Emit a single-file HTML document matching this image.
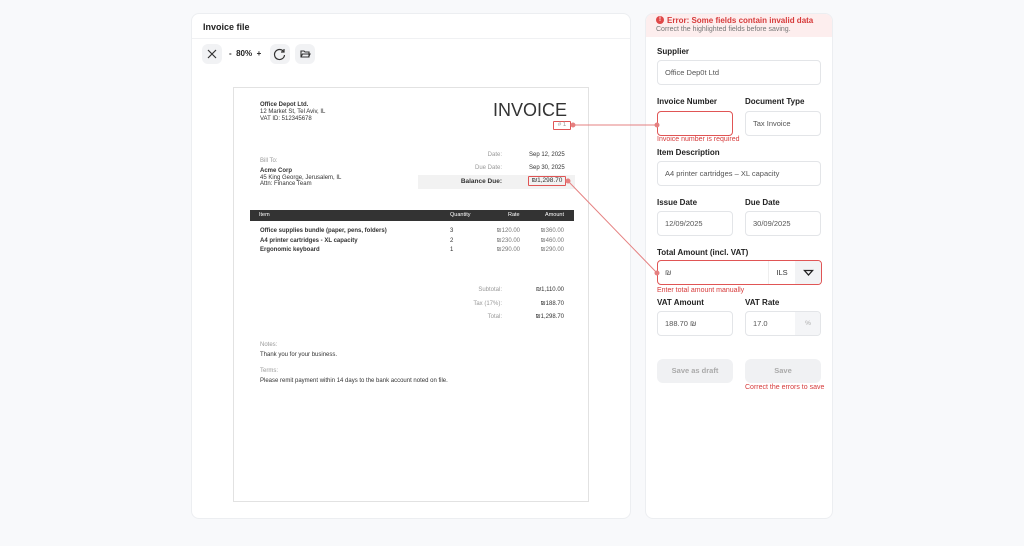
<!DOCTYPE html>
<html><head><meta charset="utf-8"><style>
*{box-sizing:border-box;margin:0;padding:0}
body{width:1024px;height:546px;background:#f8f9fb;font-family:"Liberation Sans",sans-serif;position:relative;overflow:hidden;color:#222}
.a{position:absolute}
.card{position:absolute;background:#fff;border:1px solid #eceef1;border-radius:8px}
.btn{position:absolute;width:20px;height:20px;border-radius:6px;background:#f1f2f4}
.doc{font-size:6px;color:#333}
.lbl{position:absolute;font-size:8px;font-weight:bold;color:#222}
.inp{position:absolute;height:25px;border:1px solid #e3e5e8;border-radius:4px;background:#fff;font-size:7.5px;color:#555;padding-left:7px;line-height:23px}
.err{position:absolute;font-size:7px;color:#d63a3a}
.r{text-align:right}
</style></head><body>
<div class="card" style="left:191px;top:13px;width:440px;height:506px"></div>
<div class="a" style="left:203px;top:22px;font-size:9px;font-weight:bold">Invoice file</div>
<div class="a" style="left:192px;top:38px;width:438px;height:1px;background:#f0f1f3"></div>
<div class="btn" style="left:202px;top:44px"><svg width="20" height="20"><path d="M6 6L14 14M14 6L6 14" stroke="#333" stroke-width="1.2"/></svg></div>
<div class="a" style="left:229px;top:49px;font-size:8px;font-weight:bold">-&nbsp;&nbsp;80%&nbsp;&nbsp;+</div>
<div class="btn" style="left:270px;top:44px"><svg width="20" height="20"><path d="M13.5 7.5A5 5 0 1 0 14.5 11" fill="none" stroke="#333" stroke-width="1.2"/><path d="M14 5V8H11" fill="none" stroke="#333" stroke-width="1.2"/></svg></div>
<div class="btn" style="left:295px;top:44px"><svg width="20" height="20"><path d="M6 13V7H9L10 8H14V13Z M6 13L7.5 10H15L13.5 13" fill="none" stroke="#333" stroke-width="1.1"/></svg></div>

<div class="a doc" style="left:233px;top:87px;width:356px;height:415px;border:1px solid #e2e2e2;background:#fff">
<div class="a" style="left:26px;top:14px;line-height:7px"><b>Office Depot Ltd.</b><br>12 Market St, Tel Aviv, IL<br>VAT ID: 512345678</div>
<div class="a" style="right:21px;top:12px;font-size:18px;color:#333">INVOICE</div>
<div class="a" style="left:319px;top:33px;width:18px;height:9px;border:1px solid #e05555;border-radius:1px;font-size:6px;color:#999;text-align:center;line-height:7px"># 1</div>
<div class="a" style="left:26px;top:70px;line-height:7px;color:#999">Bill To:</div>
<div class="a" style="left:26px;top:80px;line-height:6.5px"><b>Acme Corp</b><br>45 King George, Jerusalem, IL<br>Attn: Finance Team</div>
<div class="a r" style="left:210px;top:64px;width:58px;color:#999">Date:</div>
<div class="a" style="left:295px;top:64px">Sep 12, 2025</div>
<div class="a r" style="left:210px;top:77px;width:58px;color:#999">Due Date:</div>
<div class="a" style="left:295px;top:77px">Sep 30, 2025</div>
<div class="a" style="left:184px;top:87px;width:157px;height:14px;background:#f2f2f2"></div>
<div class="a r" style="left:200px;top:90px;width:68px;font-weight:bold;font-size:6.5px">Balance Due:</div>
<div class="a" style="left:294px;top:88px;width:38px;height:10px;border:1px solid #e05555;border-radius:1px;font-size:6.5px;line-height:8px;text-align:center">₪1,298.70</div>
<div class="a" style="left:16px;top:122px;width:324px;height:11px;background:#333;color:#fff;font-size:5.5px;line-height:11px"><span class="a" style="left:9px">Item</span><span class="a" style="left:200px">Quantity</span><span class="a" style="left:258px">Rate</span><span class="a" style="right:10px">Amount</span></div>
<div class="a" style="left:26px;top:139px;width:304px;line-height:9.7px;font-weight:bold">Office supplies bundle (paper, pens, folders)<br>A4 printer cartridges - XL capacity<br>Ergonomic keyboard</div>
<div class="a" style="left:216px;top:139px;line-height:9.7px">3<br>2<br>1</div>
<div class="a r" style="left:250px;top:139px;width:36px;line-height:9.7px;color:#777">₪120.00<br>₪230.00<br>₪290.00</div>
<div class="a r" style="left:290px;top:139px;width:40px;line-height:9.7px;color:#777">₪360.00<br>₪460.00<br>₪290.00</div>
<div class="a r" style="left:220px;top:196px;width:48px;line-height:13.5px;color:#999">Subtotal:<br>Tax (17%):<br>Total:</div>
<div class="a r" style="left:290px;top:196px;width:40px;line-height:13.5px">₪1,110.00<br>₪188.70<br>₪1,298.70</div>
<div class="a" style="left:26px;top:254px;color:#999">Notes:</div>
<div class="a" style="left:26px;top:264px">Thank you for your business.</div>
<div class="a" style="left:26px;top:280px;color:#999">Terms:</div>
<div class="a" style="left:26px;top:290px">Please remit payment within 14 days to the bank account noted on file.</div>
</div>

<div class="card" style="left:645px;top:13px;width:188px;height:506px;overflow:hidden">
<div class="a" style="left:0;top:0;width:188px;height:23px;background:#fdeeee"></div>
<div class="a" style="left:10px;top:2px;width:8px;height:8px;border-radius:50%;background:#e04848;color:#fff;font-size:6px;text-align:center;line-height:8px;font-weight:bold">!</div>
<div class="a" style="left:21px;top:2px;font-size:8px;font-weight:bold;color:#d63a3a">Error: Some fields contain invalid data</div>
<div class="a" style="left:10px;top:12px;font-size:7px;color:#777">Correct the highlighted fields before saving.</div>
</div>
<div class="lbl" style="left:657px;top:47px">Supplier</div>
<div class="inp" style="left:657px;top:60px;width:164px">Office Dep0t Ltd</div>
<div class="lbl" style="left:657px;top:97px">Invoice Number</div>
<div class="lbl" style="left:745px;top:97px">Document Type</div>
<div class="inp" style="left:657px;top:111px;width:76px;border-color:#e05555"></div>
<div class="inp" style="left:745px;top:111px;width:76px">Tax Invoice</div>
<div class="err" style="left:657px;top:136px">Invoice number is required</div>
<div class="lbl" style="left:657px;top:148px">Item Description</div>
<div class="inp" style="left:657px;top:161px;width:164px">A4 printer cartridges – XL capacity</div>
<div class="lbl" style="left:657px;top:198px">Issue Date</div>
<div class="lbl" style="left:745px;top:198px">Due Date</div>
<div class="inp" style="left:657px;top:211px;width:76px">12/09/2025</div>
<div class="inp" style="left:745px;top:211px;width:76px">30/09/2025</div>
<div class="lbl" style="left:657px;top:248px">Total Amount (incl. VAT)</div>
<div class="inp" style="left:657px;top:260px;width:165px;border-color:#e05555;overflow:hidden">₪
<div class="a" style="left:110px;top:0;width:27px;height:23px;border-left:1px solid #eee;text-align:center;color:#333">ILS</div>
<div class="a" style="left:137px;top:0;width:27px;height:23px;background:#f2f3f5"><svg width="27" height="23"><path d="M9.5 9.5H17.5L13.5 14Z" fill="none" stroke="#222" stroke-width="1.3"/></svg></div></div>
<div class="err" style="left:657px;top:287px">Enter total amount manually</div>
<div class="lbl" style="left:657px;top:298px">VAT Amount</div>
<div class="lbl" style="left:745px;top:298px">VAT Rate</div>
<div class="inp" style="left:657px;top:311px;width:76px">188.70 ₪</div>
<div class="inp" style="left:745px;top:311px;width:76px;overflow:hidden">17.0<div class="a" style="left:49px;top:0;width:26px;height:23px;background:#f4f5f7;text-align:center;color:#aaa;font-size:6.5px">%</div></div>
<div class="a" style="left:657px;top:359px;width:76px;height:24px;border-radius:6px;background:#f0f1f3;color:#aaa;font-size:7.5px;font-weight:bold;text-align:center;line-height:24px">Save as draft</div>
<div class="a" style="left:745px;top:359px;width:76px;height:24px;border-radius:6px;background:#f0f1f3;color:#aaa;font-size:7.5px;font-weight:bold;text-align:center;line-height:24px">Save</div>
<div class="err" style="left:745px;top:384px">Correct the errors to save</div>

<svg class="a" style="left:0;top:0" width="1024" height="546"><g stroke="#e58080" stroke-width="1" fill="#e58080"><line x1="573" y1="125" x2="657" y2="125"/><circle cx="573" cy="125" r="2"/><circle cx="657" cy="125" r="2"/><line x1="568" y1="181" x2="657" y2="273"/><circle cx="568" cy="181" r="2"/><circle cx="657" cy="273" r="2"/></g></svg>
</body></html>
